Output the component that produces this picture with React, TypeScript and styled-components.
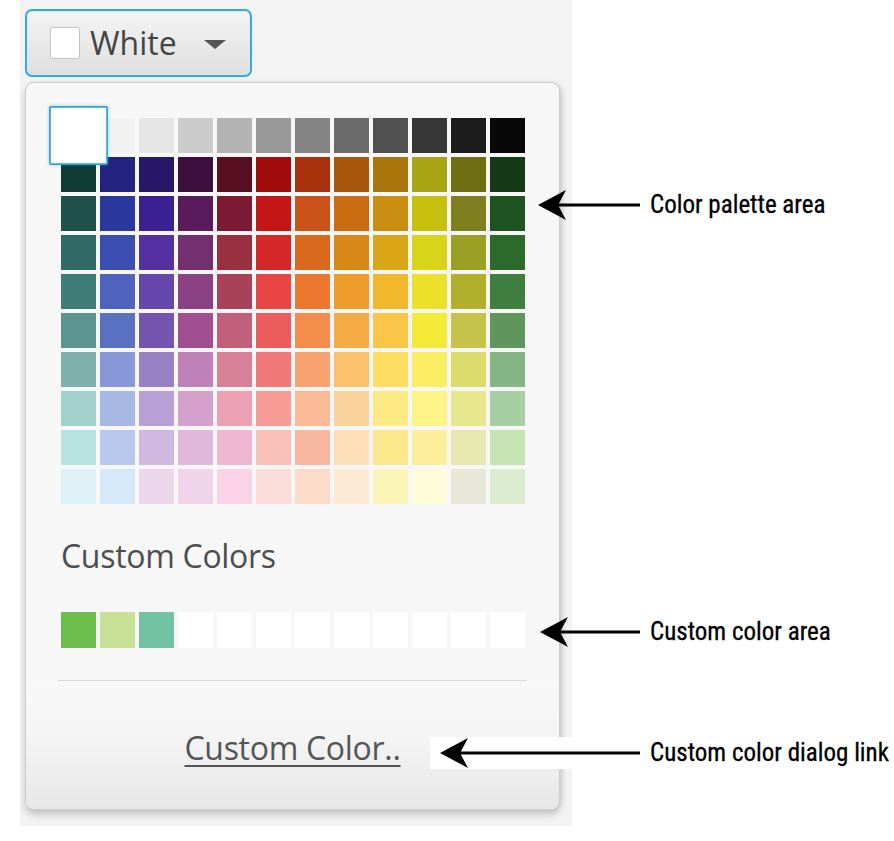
import React from "react";
import styled, { createGlobalStyle } from "styled-components";

const GlobalStyle = createGlobalStyle`
  html, body {
    margin: 0;
    padding: 0;
    background: #ffffff;
  }
  body {
    font-family: "Open Sans", "Noto Sans", sans-serif;
  }
`;

const PALETTE: string[][] = [
  ["#ffffff", "#f2f2f2", "#e6e6e6", "#cccccc", "#b3b3b3", "#999999", "#848484", "#6b6b6b", "#505050", "#363636", "#1c1c1c", "#080808"],
  ["#0f3b35", "#21237e", "#261867", "#3d0f3f", "#581020", "#a10c0c", "#a8320c", "#a8560c", "#a8760c", "#a8a412", "#6e6e12", "#163a18"],
  ["#1d5149", "#2a389e", "#3a2191", "#5a1a5c", "#7c1a34", "#c41616", "#c9531a", "#c96c12", "#c98e12", "#c8c00e", "#7e8020", "#1f5422"],
  ["#2f6a66", "#3c4eb0", "#5530a0", "#72306e", "#993040", "#d42828", "#d76a1c", "#d9881a", "#d9a618", "#d7d41a", "#9aa024", "#2c6a2c"],
  ["#3f7c78", "#4f62bc", "#6546aa", "#8a4282", "#a84258", "#e84444", "#ec7830", "#ee9c2c", "#f0b82a", "#ece02a", "#b0b02c", "#3f7e40"],
  ["#5c9490", "#5a70c0", "#7454ae", "#a05090", "#c0607a", "#ec5c5c", "#f48c4c", "#f6ac44", "#f9c648", "#f6ea38", "#c6c24a", "#5e965e"],
  ["#80b0ac", "#8898d8", "#9880c4", "#c080b8", "#d88098", "#f07878", "#f8a470", "#fbc26c", "#fdde60", "#fcee62", "#dcda6a", "#86b686"],
  ["#a2d0cc", "#a8b8e4", "#b8a0d4", "#d4a0cc", "#eca0b4", "#f89c98", "#faba96", "#fcd29c", "#feea84", "#fef488", "#e6e68c", "#a6d0a4"],
  ["#b8e2e0", "#b8c8ec", "#d0b8e0", "#e0b8dc", "#f0b8d0", "#f8c0b8", "#f8b8a0", "#fde0b8", "#fce88c", "#fcee9a", "#e6e8b0", "#c4e4b4"],
  ["#dff2f8", "#d6e9fa", "#ebd6ec", "#f0d4ea", "#fad4e6", "#fadcd8", "#fadcc8", "#fde8d4", "#fbf5b8", "#fdfbd8", "#e8e8d8", "#dbecd0"],
];

const CUSTOM = ["#6cbd4c", "#c8e196", "#72c3a2", "#fff", "#fff", "#fff", "#fff", "#fff", "#fff", "#fff", "#fff", "#fff"];

const Page = styled.div`
  position: relative;
  width: 894px;
  height: 841px;
  overflow: hidden;
`;

const Stage = styled.div`
  box-sizing: border-box;
  width: 552px;
  height: 826px;
  margin-left: 20px;
  padding: 9px 0 0 5px;
  background: #f3f3f3;
  display: flex;
  flex-direction: column;
  align-items: flex-start;
`;

const PickerButton = styled.div`
  box-sizing: border-box;
  width: 227px;
  height: 68px;
  display: flex;
  align-items: center;
  padding-left: 23px;
  border: 2px solid #3aa7dd;
  border-radius: 7px;
  background: linear-gradient(#f4f4f4, #dfdfdf);
  box-shadow: inset 0 0 0 1px #d4ecf8;
`;

const Swatch = styled.span`
  box-sizing: border-box;
  width: 30px;
  height: 32px;
  background: #ffffff;
  border: 1px solid #c4c4c4;
  border-radius: 2px;
`;

const ButtonText = styled.span`
  margin-left: 10px;
  font-size: 32px;
  line-height: 1;
  color: #454545;
`;

const Caret = styled.span`
  width: 0;
  height: 0;
  margin: 3px 0 0 27px;
  border-left: 11px solid transparent;
  border-right: 11px solid transparent;
  border-top: 9px solid #555555;
`;

const Panel = styled.div`
  box-sizing: border-box;
  width: 535px;
  height: 728px;
  margin-top: 5px;
  border: 1px solid #cdcdcd;
  border-radius: 9px;
  background: #f7f7f7;
  box-shadow: 0 5px 7px rgba(0, 0, 0, 0.18), 3px 0 5px rgba(0, 0, 0, 0.07);
  display: flex;
  flex-direction: column;
  overflow: hidden;
`;

const Body = styled.div`
  padding: 35px 0 0 35px;
`;

const Grid = styled.div`
  display: grid;
  grid-template-columns: repeat(12, 35px);
  grid-auto-rows: 35px;
  gap: 4px;
`;

const Cell = styled.div<{ $color: string; $selected?: boolean }>`
  box-sizing: border-box;
  background: ${(p) => p.$color};
  ${(p) =>
    p.$selected &&
    `
    position: relative;
    z-index: 1;
    transform: scale(1.68);
    border: 1.5px solid #2ea2da;
    border-radius: 1px;
    box-shadow: 0 0 2px rgba(46, 162, 218, 0.5);
  `}
`;

const SectionLabel = styled.div`
  margin-top: 33px;
  font-size: 32px;
  line-height: 38px;
  color: #4e4e4e;
  letter-spacing: -0.3px;
`;

const CustomRow = styled(Grid)`
  margin-top: 37px;
  grid-auto-rows: 36px;
`;

const Separator = styled.div`
  margin: 32px 0 0 -3px;
  width: 469px;
  height: 1px;
  background: #d9d9d9;
`;

const Footer = styled.div`
  flex: 1;
  display: flex;
  justify-content: center;
  align-items: center;
  padding-top: 6px;
  background: linear-gradient(#f8f8f8 0%, #f5f5f5 40%, #e7e7e7 100%);
`;

const Link = styled.span`
  font-size: 32px;
  line-height: 1.2;
  color: #555555;
  letter-spacing: -0.3px;
  text-decoration: underline;
  text-decoration-thickness: 2px;
  text-underline-offset: 5px;
`;

const Callout = styled.div<{ $top: number; $left: number }>`
  position: absolute;
  top: ${(p) => p.$top}px;
  left: ${(p) => p.$left}px;
  display: flex;
  align-items: center;
`;

const ArrowBox = styled.div<{ $backed?: boolean }>`
  display: flex;
  align-items: center;
  height: 32px;
  ${(p) =>
    p.$backed &&
    `
    background: #ffffff;
    margin-left: -10px;
    padding: 0 0 0 10px;
  `}
`;

const CalloutText = styled.span`
  margin-left: 10px;
  font-family: "Liberation Sans Narrow", "Roboto Condensed", "DejaVu Sans Condensed", "Roboto", sans-serif;
  font-size: 25px;
  line-height: 32px;
  color: #000000;
  white-space: nowrap;
  -webkit-text-stroke: 0.3px #000;
`;

const Arrow = ({ width }: { width: number }) => (
  <svg width={width} height={32} viewBox={`0 0 ${width} 32`}>
    <rect x={20} y={14.5} width={width - 20} height={3} fill="#000" />
    <path d="M0 16 L28 1 L20 16 L28 31 Z" fill="#000" />
  </svg>
);

const Note = ({ y, tip, text, backed }: { y: number; tip: number; text: string; backed?: boolean }) => (
  <Callout $top={y - 16} $left={tip}>
    <ArrowBox $backed={backed}>
      <Arrow width={640 - tip} />
    </ArrowBox>
    <CalloutText>{text}</CalloutText>
  </Callout>
);

export default function App() {
  return (
    <Page>
      <GlobalStyle />
      <Stage>
        <PickerButton>
          <Swatch />
          <ButtonText>White</ButtonText>
          <Caret />
        </PickerButton>
        <Panel>
          <Body>
            <Grid>
              {PALETTE.flatMap((row, r) =>
                row.map((c, i) => <Cell key={`${r}-${i}`} $color={c} $selected={r === 0 && i === 0} />)
              )}
            </Grid>
            <SectionLabel>Custom Colors</SectionLabel>
            <CustomRow>
              {CUSTOM.map((c, i) => (
                <Cell key={i} $color={c} />
              ))}
            </CustomRow>
            <Separator />
          </Body>
          <Footer>
            <Link>Custom Color..</Link>
          </Footer>
        </Panel>
      </Stage>
      <Note y={205} tip={538} text="Color palette area" />
      <Note y={632} tip={540} text="Custom color area" />
      <Note y={753} tip={440} text="Custom color dialog link" backed />
    </Page>
  );
}
